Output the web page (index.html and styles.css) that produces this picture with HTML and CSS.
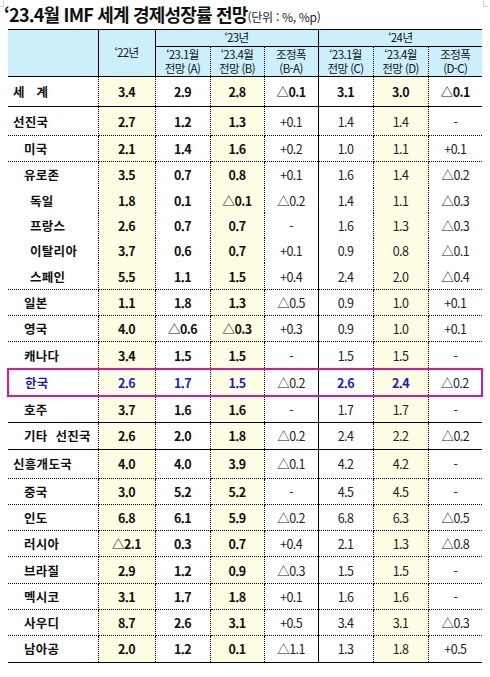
FILE: index.html
```html
<!DOCTYPE html>
<html lang="ko">
<head>
  <meta charset="UTF-8" />
  <title>IMF 세계 경제성장률 전망</title>
  <link rel="stylesheet" href="styles.css">
</head>
<body>
  <div class="page">
    <h1 class="title">‘23.4월 IMF 세계 경제성장률 전망<span class="unit">(단위 : %, %p)</span></h1>

    <table class="outlook">
      <colgroup>
        <col style="width:90px"><col style="width:57px"><col style="width:55px"><col style="width:54px">
        <col style="width:54px"><col style="width:55px"><col style="width:55px"><col style="width:54px">
      </colgroup>
      <thead>
        <tr class="h1">
          <th rowspan="2"></th>
          <th rowspan="2" class="yr">‘22년</th>
          <th colspan="3">‘23년</th>
          <th colspan="3" class="sep">‘24년</th>
        </tr>
        <tr class="h2">
          <th>‘23.1월<br>전망 (A)</th>
          <th>‘23.4월<br>전망 (B)</th>
          <th>조정폭<br>(B-A)</th>
          <th class="sep">‘23.1월<br>전망 (C)</th>
          <th>‘23.4월<br>전망 (D)</th>
          <th>조정폭<br>(D-C)</th>
        </tr>
      </thead>
      <tbody>
        <tr class="world solid tall"><td class="lv0 spaced">세계</td><td>3.4</td><td>2.9</td><td>2.8</td><td>△0.1</td><td>3.1</td><td>3.0</td><td>△0.1</td></tr>
        <tr class="tall2"><td class="lv0">선진국</td><td>2.7</td><td>1.2</td><td>1.3</td><td>+0.1</td><td>1.4</td><td>1.4</td><td>-</td></tr>
        <tr><td class="lv1">미국</td><td>2.1</td><td>1.4</td><td>1.6</td><td>+0.2</td><td>1.0</td><td>1.1</td><td>+0.1</td></tr>
        <tr class="open"><td class="lv1">유로존</td><td>3.5</td><td>0.7</td><td>0.8</td><td>+0.1</td><td>1.6</td><td>1.4</td><td>△0.2</td></tr>
        <tr class="open"><td class="lv2">독일</td><td>1.8</td><td>0.1</td><td>△0.1</td><td>△0.2</td><td>1.4</td><td>1.1</td><td>△0.3</td></tr>
        <tr class="open"><td class="lv2">프랑스</td><td>2.6</td><td>0.7</td><td>0.7</td><td>-</td><td>1.6</td><td>1.3</td><td>△0.3</td></tr>
        <tr class="open"><td class="lv2">이탈리아</td><td>3.7</td><td>0.6</td><td>0.7</td><td>+0.1</td><td>0.9</td><td>0.8</td><td>△0.1</td></tr>
        <tr><td class="lv2">스페인</td><td>5.5</td><td>1.1</td><td>1.5</td><td>+0.4</td><td>2.4</td><td>2.0</td><td>△0.4</td></tr>
        <tr><td class="lv1">일본</td><td>1.1</td><td>1.8</td><td>1.3</td><td>△0.5</td><td>0.9</td><td>1.0</td><td>+0.1</td></tr>
        <tr><td class="lv1">영국</td><td>4.0</td><td>△0.6</td><td>△0.3</td><td>+0.3</td><td>0.9</td><td>1.0</td><td>+0.1</td></tr>
        <tr><td class="lv1">캐나다</td><td>3.4</td><td>1.5</td><td>1.5</td><td>-</td><td>1.5</td><td>1.5</td><td>-</td></tr>
        <tr class="korea"><td class="lv1">한국</td><td>2.6</td><td>1.7</td><td>1.5</td><td>△0.2</td><td>2.6</td><td>2.4</td><td>△0.2</td></tr>
        <tr class="solid"><td class="lv1">호주</td><td>3.7</td><td>1.6</td><td>1.6</td><td>-</td><td>1.7</td><td>1.7</td><td>-</td></tr>
        <tr class="solid"><td class="lv1 wide">기타 선진국</td><td>2.6</td><td>2.0</td><td>1.8</td><td>△0.2</td><td>2.4</td><td>2.2</td><td>△0.2</td></tr>
        <tr class="tall2"><td class="lv0">신흥개도국</td><td>4.0</td><td>4.0</td><td>3.9</td><td>△0.1</td><td>4.2</td><td>4.2</td><td>-</td></tr>
        <tr><td class="lv1">중국</td><td>3.0</td><td>5.2</td><td>5.2</td><td>-</td><td>4.5</td><td>4.5</td><td>-</td></tr>
        <tr><td class="lv1">인도</td><td>6.8</td><td>6.1</td><td>5.9</td><td>△0.2</td><td>6.8</td><td>6.3</td><td>△0.5</td></tr>
        <tr><td class="lv1">러시아</td><td>△2.1</td><td>0.3</td><td>0.7</td><td>+0.4</td><td>2.1</td><td>1.3</td><td>△0.8</td></tr>
        <tr><td class="lv1">브라질</td><td>2.9</td><td>1.2</td><td>0.9</td><td>△0.3</td><td>1.5</td><td>1.5</td><td>-</td></tr>
        <tr><td class="lv1">멕시코</td><td>3.1</td><td>1.7</td><td>1.8</td><td>+0.1</td><td>1.6</td><td>1.6</td><td>-</td></tr>
        <tr><td class="lv1">사우디</td><td>8.7</td><td>2.6</td><td>3.1</td><td>+0.5</td><td>3.4</td><td>3.1</td><td>△0.3</td></tr>
        <tr class="solid"><td class="lv1">남아공</td><td>2.0</td><td>1.2</td><td>0.1</td><td>△1.1</td><td>1.3</td><td>1.8</td><td>+0.5</td></tr>
      </tbody>
    </table>
  </div>
</body>
</html>
```

FILE: styles.css
```css
body {
  margin: 0;
  background: #fff;
  color: #1a1a1a;
  font-family: "Noto Sans CJK KR", "Noto Sans", sans-serif;
}

.page {
  position: relative;
  width: 490px;
  height: 677px;
}

/* crop marks in the corners */
.page::before,
.page::after {
  content: "";
  position: absolute;
  top: 0;
  width: 4px;
  height: 6px;
  border: 1px solid #cfcfcf;
  border-top: none;
}

.page::before {
  left: -1px;
  border-left: none;
}

.page::after {
  right: 2px;
  border-right: none;
}

.title {
  margin: 0;
  padding: 2px 0 0 4px;
  height: 27px;
  font-size: 18px;
  font-weight: bold;
  letter-spacing: -0.8px;
  line-height: 24px;
  color: #111;
}

.unit {
  font-size: 12px;
  font-weight: normal;
  letter-spacing: -0.3px;
  margin-left: 0;
  color: #222;
}

.outlook {
  margin-left: 7px;
  width: 474px;
  table-layout: fixed;
  border-collapse: collapse;
  font-size: 12.5px;
  letter-spacing: -0.6px;
}

.outlook th,
.outlook td {
  padding: 0;
  text-align: center;
  border: 1px dotted #000;
}

.outlook tr > :first-child {
  border-left: none;
}

.outlook tr > :last-child {
  border-right: none;
}

/* header */
.outlook th {
  background: #ccf0fb;
  font-weight: normal;
  font-size: 11.5px;
  line-height: 13.5px;
  border-style: solid;
  color: #111;
}

.h1 th {
  height: 16px;
}

.h2 th {
  height: 29px;
  border-left-style: dotted;
  border-right-style: dotted;
}

.outlook th.sep,
.outlook td:nth-child(6) {
  border-left: 1px solid #000;
}

/* body */
.outlook td {
  height: 25.3px;
  color: #222;
}

.outlook td:nth-child(2),
.outlook td:nth-child(4),
.outlook td:nth-child(7) {
  background: #fffde3;
}

.outlook td:nth-child(-n+4) {
  font-weight: bold;
  color: #111;
}

.outlook td.lv0,
.outlook td.lv1,
.outlook td.lv2 {
  text-align: left;
  letter-spacing: 0.3px;
}

.outlook td.lv0 { padding-left: 5px; }
.outlook td.lv1 { padding-left: 16px; }
.outlook td.lv2 { padding-left: 22px; }

.outlook td.spaced {
  letter-spacing: 12px;
}

.wide {
  word-spacing: 4px;
}

.world td {
  font-weight: bold;
  color: #111;
}

.tall td { height: 29px; }
.tall2 td { height: 28px; }

.solid td {
  border-bottom: 1px solid #000;
}

.open td {
  border-bottom: hidden;
}

.korea td {
  border-top: 2px solid #e0169a;
  border-bottom: 2px solid #e0169a;
}

.korea td:first-child {
  border-left: 2px solid #e0169a;
}

.korea td:last-child {
  border-right: 2px solid #e0169a;
}

.korea td:nth-child(-n+4),
.korea td:nth-child(6),
.korea td:nth-child(7) {
  color: #1c1ccc;
  font-weight: bold;
}
```
